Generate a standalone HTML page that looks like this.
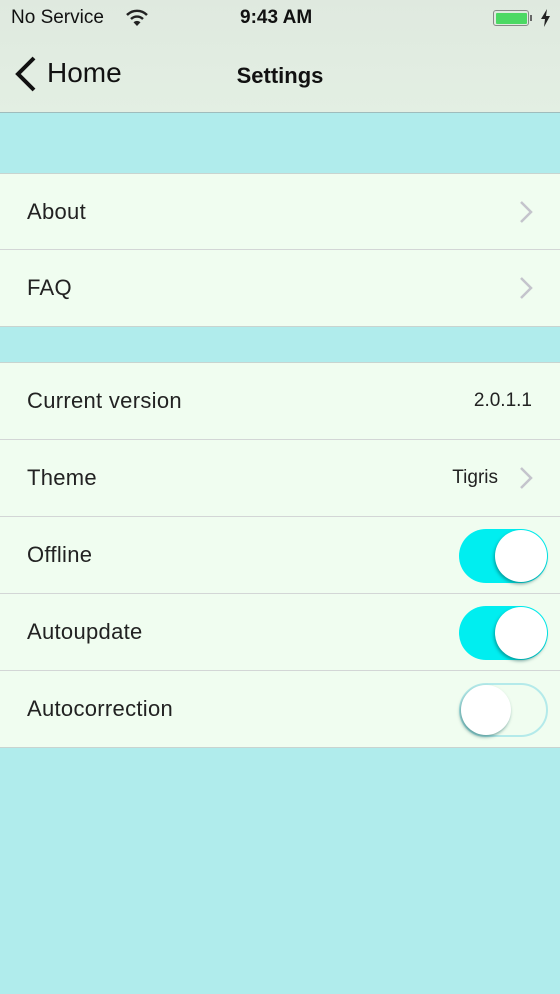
<!DOCTYPE html>
<html><head><meta charset="utf-8"><style>
*{margin:0;padding:0;box-sizing:border-box}
body{width:560px;height:994px;background:#b0ecec;font-family:"Liberation Sans",sans-serif;position:relative;overflow:hidden}
.top{position:absolute;left:0;top:0;width:560px;height:113px;background:linear-gradient(#dfe9df,#e3efe3);border-bottom:1px solid #9fbcbc}
.sb{position:absolute;top:7px;font-size:19px;color:#111}
.group{position:absolute;left:0;width:560px;background:#f0fdf0;border-top:1px solid #c8d4d0;border-bottom:1px solid #c8d4d0}
.row{height:77px;position:relative;border-bottom:1px solid #d3d6d6}
.g1 .row{height:76px}
.g1 .row:last-child{height:76px}
.row:last-child{border-bottom:none;height:76px}
.lbl{position:absolute;left:27px;top:0;line-height:75px;font-size:22px;color:#222;letter-spacing:0.3px}
.val{position:absolute;right:28px;top:0;line-height:75px;font-size:19px;color:#222}
.chev{position:absolute;right:27px;top:27px}
.tg{position:absolute;right:12px;top:12px;width:89px;height:54px;border-radius:27px;background:#00eef0}
.tg .k{position:absolute;right:1px;top:1px;width:52px;height:52px;border-radius:50%;background:#fff;box-shadow:-1px 2px 3px rgba(0,80,80,.5)}
.tg.off{background:#f0fdf0;border:2px solid #b4eaea}
.tg.off .k{left:0;right:auto;top:0;width:50px;height:50px}
</style></head><body>
<div class="top">
<div class="sb" style="left:11px">No Service</div>
<svg style="position:absolute;left:125px;top:9px" width="24" height="18" viewBox="0 0 24 18"><path d="M2 6 A14 14 0 0 1 22 6" stroke="#222" stroke-width="2.4" fill="none"/><path d="M6 10 A8.5 8.5 0 0 1 18 10" stroke="#222" stroke-width="2.4" fill="none"/><path d="M12 17 L8.5 13.3 A5 5 0 0 1 15.5 13.3Z" fill="#222"/></svg>
<div class="sb" style="left:240px;font-weight:bold">9:43 AM</div>
<div style="position:absolute;left:493px;top:10px;width:36px;height:16px;border:1.5px solid #888;border-radius:3px;padding:1.5px"><div style="width:100%;height:100%;background:#4cd964;border-radius:1px"></div></div>
<div style="position:absolute;left:530px;top:15px;width:2px;height:6px;background:#666"></div>
<svg style="position:absolute;left:540px;top:9px" width="11" height="18" viewBox="0 0 11 18"><path d="M7 0 L1 10 H5 L4 18 L10 7 H6Z" fill="#222"/></svg>
<svg style="position:absolute;left:13px;top:56px" width="26" height="36" viewBox="0 0 26 36"><path d="M21 2 L5 18 L21 34" stroke="#111" stroke-width="4" fill="none"/></svg>
<div style="position:absolute;left:47px;top:57px;font-size:28px;color:#111">Home</div>
<div style="position:absolute;left:0;width:560px;text-align:center;top:63px;font-size:22px;font-weight:bold;color:#111">Settings</div>
</div>
<div class="group g1" style="top:173px">
<div class="row"><div class="lbl">About</div><svg class="chev" width="14" height="22" viewBox="0 0 14 22"><path d="M2 1 L12 11 L2 21" stroke="#c4c4cc" stroke-width="2.5" fill="none"/></svg></div>
<div class="row"><div class="lbl">FAQ</div><svg class="chev" width="14" height="22" viewBox="0 0 14 22"><path d="M2 1 L12 11 L2 21" stroke="#c4c4cc" stroke-width="2.5" fill="none"/></svg></div>
</div>
<div class="group" style="top:362px">
<div class="row"><div class="lbl">Current version</div><div class="val">2.0.1.1</div></div>
<div class="row"><div class="lbl">Theme</div><div class="val" style="right:62px">Tigris</div><svg class="chev" width="14" height="22" viewBox="0 0 14 22"><path d="M2 1 L12 11 L2 21" stroke="#c4c4cc" stroke-width="2.5" fill="none"/></svg></div>
<div class="row"><div class="lbl">Offline</div><div class="tg"><div class="k"></div></div></div>
<div class="row"><div class="lbl">Autoupdate</div><div class="tg"><div class="k"></div></div></div>
<div class="row"><div class="lbl">Autocorrection</div><div class="tg off"><div class="k"></div></div></div>
</div>
</body></html>
